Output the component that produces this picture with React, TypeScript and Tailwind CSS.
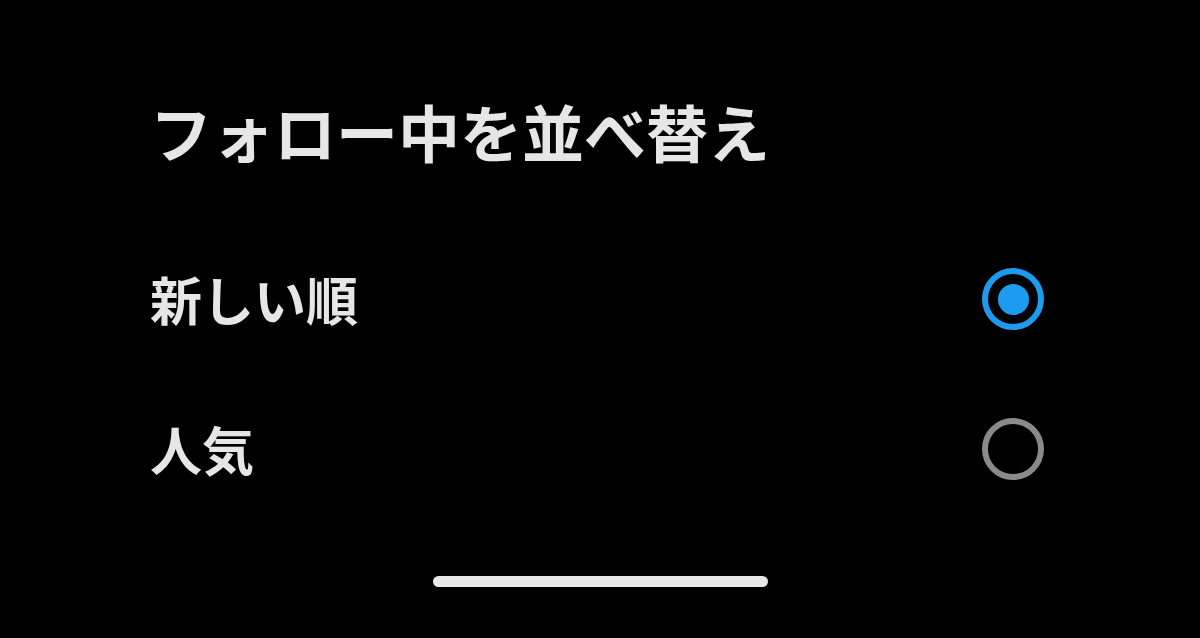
const FONT = { fontFamily: '"Noto Sans CJK JP", "Noto Sans", sans-serif' };

function Radio({ checked }: { checked: boolean }) {
  return checked ? (
    <span className="flex h-[62px] w-[62px] items-center justify-center rounded-full border-[6px] border-[#1d9bf0]">
      <span className="h-[31px] w-[31px] rounded-full bg-[#1d9bf0]" />
    </span>
  ) : (
    <span className="h-[62px] w-[62px] rounded-full border-[6px] border-[#8a8a8a]" />
  );
}

export default function App() {
  const options = [
    { label: "新しい順", checked: true },
    { label: "人気", checked: false },
  ];
  return (
    <div className="flex h-[638px] w-[1200px] flex-col bg-black text-[#e6e6e6]" style={FONT}>
      <div className="flex-1 pl-[150px] pr-[156px] pt-[88px]">
        <h1 className="text-[62px] font-bold leading-[86px]">フォロー中を並べ替え</h1>
        <ul className="mt-[50px]">
          {options.map((o) => (
            <li key={o.label} className="flex h-[150px] items-center justify-between">
              <span className="text-[52px] font-bold leading-none">{o.label}</span>
              <Radio checked={o.checked} />
            </li>
          ))}
        </ul>
      </div>
      <div className="flex justify-center pb-[51px]">
        <div className="h-[11px] w-[335px] rounded-full bg-[#e8e8e8]" />
      </div>
    </div>
  );
}
